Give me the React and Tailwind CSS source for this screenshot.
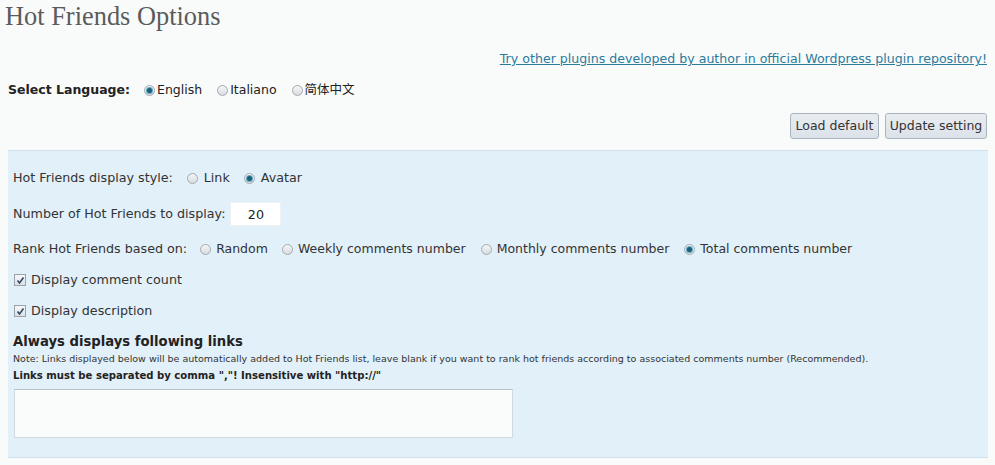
import React from 'react';

const Radio = ({ checked }) => (
  <span className="inline-flex w-[11px] h-[11px] shrink-0 items-center justify-center rounded-full border border-[#a3aab0] bg-gradient-to-b from-[#f4f5f6] to-[#d9dde0]">
    {checked && <span className="w-[5px] h-[5px] rounded-full bg-[#1d5f78] shadow-[0_0_0_1px_#5fa9c2]"></span>}
  </span>
);

const Check = () => (
  <span className="inline-flex w-[12px] h-[12px] shrink-0 items-center justify-center border border-[#9ba3a9] bg-gradient-to-b from-[#f7f8f9] to-[#dde1e4]">
    <svg width="9" height="9" viewBox="0 0 9 9">
      <path d="M1.5 4.5 L3.5 7 L7.5 1.5" fill="none" stroke="#2c4a66" strokeWidth="1.6" />
    </svg>
  </span>
);

const Option = ({ checked, label, gap = 'gap-[6px]', size = '' }) => (
  <label className={`flex items-center ${gap} ${size}`}>
    <Radio checked={checked} />
    <span>{label}</span>
  </label>
);

export default function App() {
  return (
    <div className="min-h-screen bg-[#f9fafa] px-2 font-['DejaVu_Sans','Noto_Sans_CJK_SC',Verdana,sans-serif] text-[#333]">
      {/* Title */}
      <h2 className="-ml-[3px] h-[32px] font-['Liberation_Serif',Georgia,serif] text-[26.4px] leading-[32px] text-[#5b5b5b]">
        Hot Friends Options
      </h2>

      {/* Plugin link */}
      <div className="mt-[19px] flex justify-end">
        <a href="#" className="text-[12.6px] leading-4 text-[#2a7b9c] underline">
          Try other plugins developed by author in official Wordpress plugin repository!
        </a>
      </div>

      {/* Language */}
      <div className="mt-[15px] flex h-4 items-center text-[12.5px] text-[#222]">
        <span className="font-bold mr-[14px]">Select Language:</span>
        <Option checked label="English" gap="gap-[2px]" />
        <span className="w-[15px]"></span>
        <Option label="Italiano" gap="gap-[2px]" />
        <span className="w-[15px]"></span>
        <Option label="简体中文" gap="gap-[2px]" />
      </div>

      {/* Buttons */}
      <div className="mt-[15px] flex justify-end gap-[6px]">
        <button className="h-[26px] w-[89px] rounded-[3px] border border-[#a9b4be] bg-gradient-to-b from-[#e9edf1] to-[#dbe2e9] text-[12.5px] text-[#333]">
          Load default
        </button>
        <button className="h-[26px] w-[102px] rounded-[3px] border border-[#a9b4be] bg-gradient-to-b from-[#e9edf1] to-[#dbe2e9] text-[12.5px] text-[#333]">
          Update setting
        </button>
      </div>

      {/* Settings panel */}
      <div className="mt-[11px] mr-[-1px] flex flex-col border-t border-b border-[#d2e1eb] bg-[#e2f0f9] px-[5px] pt-[19px] pb-[19px] text-[12.7px]">
        <div className="flex h-4 items-center">
          <span className="mr-[14px]">Hot Friends display style:</span>
          <Option label="Link" />
          <span className="w-[14px]"></span>
          <Option checked label="Avatar" />
        </div>

        <div className="mt-[16px] flex h-[24px] items-center">
          <span className="mr-[5px]">Number of Hot Friends to display:</span>
          <input
            readOnly
            value="20"
            className="h-[24px] w-[51px] border border-[#edf2f5] bg-white text-center text-[12.7px] text-[#222] outline-none"
          />
        </div>

        <div className="mt-[15px] flex h-4 items-center">
          <span className="mr-[13px]">Rank Hot Friends based on:</span>
          <Option label="Random" gap="gap-[5px]" size="text-[12.5px]" />
          <span className="w-[14px]"></span>
          <Option label="Weekly comments number" gap="gap-[5px]" size="text-[12.5px]" />
          <span className="w-[15px]"></span>
          <Option label="Monthly comments number" gap="gap-[5px]" size="text-[12.5px]" />
          <span className="w-[15px]"></span>
          <Option checked label="Total comments number" gap="gap-[5px]" size="text-[12.5px]" />
        </div>

        <label className="mt-[15px] flex h-4 items-center gap-[5px] pl-[1px]">
          <Check />
          <span>Display comment count</span>
        </label>

        <label className="mt-[15px] flex h-4 items-center gap-[5px] pl-[1px]">
          <Check />
          <span>Display description</span>
        </label>

        <h3 className="mt-[15px] h-4 text-[13.2px] font-bold leading-4 text-[#222]">Always displays following links</h3>
        <p className="mt-[2px] h-[14px] text-[9.5px] leading-[14px] text-[#333]">
          Note: Links displayed below will be automatically added to Hot Friends list, leave blank if you want to rank hot friends according to associated comments number (Recommended).
        </p>
        <p className="mt-[3px] h-[14px] text-[10.1px] font-bold leading-[14px] text-[#222]">
          Links must be separated by comma ","! Insensitive with "http://"
        </p>
        <textarea
          readOnly
          className="mt-[6px] ml-[1px] h-[49px] w-[499px] resize-none border border-[#d3dadf] border-t-[#b9c0c5] bg-[#fafbfb] outline-none"
        ></textarea>
      </div>
    </div>
  );
}
